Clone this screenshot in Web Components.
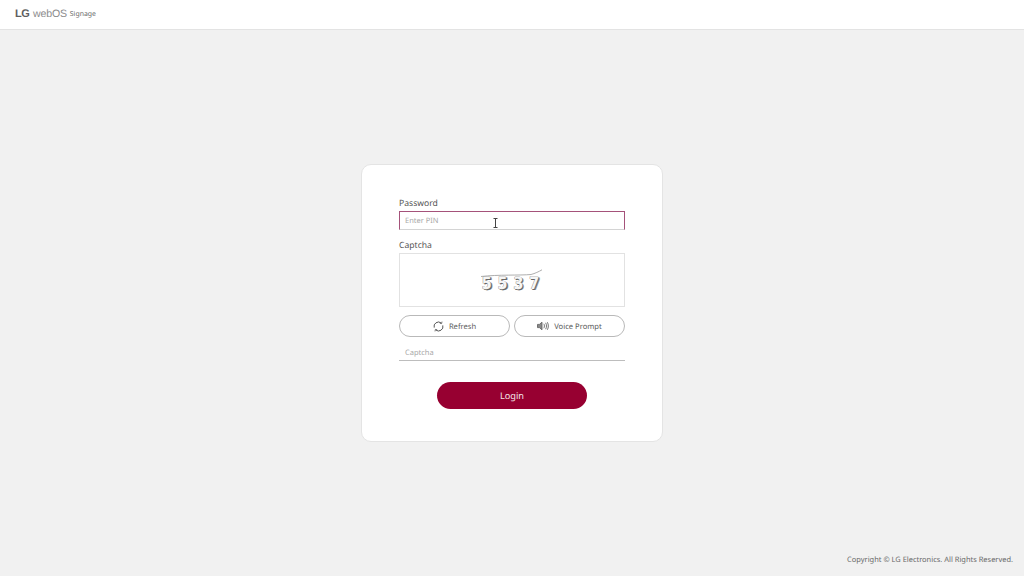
<!DOCTYPE html>
<html lang="en">
<head>
<meta charset="utf-8">
<title>LG webOS Signage</title>
<style>
  html, body { margin: 0; height: 100%; }
  body { font-family: "Noto Sans", sans-serif; background: #f1f1f1; text-rendering: geometricPrecision; }
</style>
</head>
<body>
<signage-page>
  <signage-header slot="header"></signage-header>
  <login-card>
    <form-label>Password</form-label>
    <pin-input placeholder="Enter PIN"></pin-input>
    <form-label class="second">Captcha</form-label>
    <captcha-box></captcha-box>
    <captcha-actions></captcha-actions>
    <captcha-input placeholder="Captcha"></captcha-input>
    <login-button>Login</login-button>
  </login-card>
  <signage-footer slot="footer">Copyright © LG Electronics. All Rights Reserved.</signage-footer>
</signage-page>

<script>
class SignagePage extends HTMLElement {
  constructor() {
    super();
    this.attachShadow({ mode: 'open' });
    this.shadowRoot.innerHTML = `
      <style>
        :host { display: grid; grid-template-rows: 30px 1fr 32px; height: 576px; }
        main { display: flex; justify-content: center; padding-top: 134px; }
      </style>
      <slot name="header"></slot>
      <main><slot></slot></main>
      <slot name="footer"></slot>
    `;
  }
}

class SignageHeader extends HTMLElement {
  constructor() {
    super();
    this.attachShadow({ mode: 'open' });
    this.shadowRoot.innerHTML = `
      <style>
        :host {
          display: flex; align-items: center; box-sizing: border-box; height: 30px;
          padding: 0 0 2px 15px; background: #fff; border-bottom: 1px solid #e3e3e3;
          color: #6a6a6a; white-space: nowrap;
        }
        .lg { font: bold 11px "Liberation Sans", sans-serif; letter-spacing: -0.4px; margin-right: 3.6px; color: #5f5f5f; }
        .web { font: 10.6px "Liberation Sans", sans-serif; letter-spacing: -0.2px; margin-right: 3px; color: #8c8c8c; }
        .sig { font: 6.9px "Noto Sans", sans-serif; position: relative; top: 1px; }
      </style>
      <span class="lg">LG</span><span class="web">webOS</span><span class="sig">Signage</span>
    `;
  }
}

class LoginCard extends HTMLElement {
  constructor() {
    super();
    this.attachShadow({ mode: 'open' });
    this.shadowRoot.innerHTML = `
      <style>
        :host {
          display: flex; flex-direction: column; box-sizing: border-box;
          width: 302px; height: 278px; padding: 30px 37px 0;
          background: #fff; border: 1px solid #e4e4e4; border-radius: 10px;
        }
      </style>
      <slot></slot>
    `;
  }
}

class FormLabel extends HTMLElement {
  constructor() {
    super();
    this.attachShadow({ mode: 'open' });
    this.shadowRoot.innerHTML = `
      <style>
        :host { display: block; height: 16px; font-size: 8.6px; line-height: 17px; color: #555; }
        :host(.second) { height: 15px; margin-top: 7px; }
      </style>
      <slot></slot>
    `;
  }
}

class PinInput extends HTMLElement {
  constructor() {
    super();
    this.attachShadow({ mode: 'open' });
    this.shadowRoot.innerHTML = `
      <style>
        :host {
          display: block; position: relative; box-sizing: border-box; height: 19px;
          border: 1px solid #a5527a; border-bottom: 1px solid #d4d4d4;
          font-size: 7.5px; line-height: 18px; color: #a8a8a8; padding-left: 5px;
        }
        svg { position: absolute; left: 93px; top: 6px; }
      </style>
      <span>${this.getAttribute('placeholder')}</span>
      <svg width="5" height="10" viewBox="0 0 5 10" fill="none" stroke="#444" stroke-width="1">
        <path d="M0.5 .5h4M2.5 .5v9M0.5 9.5h4"/>
      </svg>
    `;
  }
}

class CaptchaBox extends HTMLElement {
  constructor() {
    super();
    this.attachShadow({ mode: 'open' });
    this.shadowRoot.innerHTML = `
      <style>
        :host {
          display: flex; align-items: center; justify-content: center; position: relative;
          box-sizing: border-box; height: 54px; margin-top: 1px; border: 1px solid #e2e2e2;
        }
        .digits {
          font: bold 17px "DejaVu Sans", sans-serif; letter-spacing: 7px; color: #f6f6f6;
          text-shadow: 1px 1px 0 #666, 2px 1px 0 #999, -.5px 0 0 #999, 0 -.5px 0 #888;
          transform: scaleX(.84); padding: 8px 0 0 3px;
        }
        svg { position: absolute; left: 80px; top: 14px; }
      </style>
      <span class="digits">5537</span>
      <svg width="64" height="10" viewBox="0 0 64 10" fill="none" stroke="#999" stroke-width=".8">
        <path d="M1 8.5C18 6.5 40 7.5 51 6.5 55 5.5 59 3.5 62 1.8"/>
      </svg>
    `;
  }
}

class CaptchaActions extends HTMLElement {
  constructor() {
    super();
    this.attachShadow({ mode: 'open' });
    this.shadowRoot.innerHTML = `
      <style>
        :host { display: grid; grid-template-columns: 1fr 1fr; gap: 4px; margin-top: 8px; }
      </style>
      <pill-button>
        <svg slot="icon" width="11" height="11" viewBox="0 0 11 11" fill="none" stroke="#555" stroke-width="1">
          <path d="M1.2 6.6A4.4 4.4 0 0 1 8.2 2"/><path d="M9.8 4.4A4.4 4.4 0 0 1 2.8 9"/>
          <path d="M9 .6 8.6 2.6 6.8 2.2" stroke-width=".8"/><path d="M2 10.4 2.4 8.4 4.2 8.8" stroke-width=".8"/>
        </svg>
        Refresh
      </pill-button>
      <pill-button>
        <svg slot="icon" width="12" height="10" viewBox="0 0 12 10" fill="none" stroke="#666" stroke-width=".9">
          <path d="M.5 3.4H2.4L5 1.2V8.8L2.4 6.6H.5Z" fill="#888"/>
          <path d="M6.8 2.8C7.6 4 7.6 6 6.8 7.2"/><path d="M8.6 1.8C9.8 3.6 9.8 6.4 8.6 8.2"/>
          <path d="M10.3 1.2C11.7 3.4 11.7 6.6 10.3 8.8"/>
        </svg>
        Voice Prompt
      </pill-button>
    `;
  }
}

class PillButton extends HTMLElement {
  constructor() {
    super();
    this.attachShadow({ mode: 'open' });
    this.shadowRoot.innerHTML = `
      <style>
        :host {
          display: flex; align-items: center; justify-content: center; gap: 5px;
          box-sizing: border-box; height: 22px; border: 1px solid #b9b9b9; border-radius: 11px;
          background: #fff; font-size: 7.6px; color: #5a5a5a;
        }
        ::slotted(svg) { display: block; }
        span { position: relative; top: 1px; }
      </style>
      <slot name="icon"></slot><span><slot></slot></span>
    `;
  }
}

class CaptchaInput extends HTMLElement {
  constructor() {
    super();
    this.attachShadow({ mode: 'open' });
    this.shadowRoot.innerHTML = `
      <style>
        :host {
          display: block; box-sizing: border-box; height: 19px; margin-top: 5px; padding-left: 6px;
          border-bottom: 1px solid #bdbdbd; font-size: 7.5px; line-height: 22px; color: #a8a8a8;
        }
      </style>
      <span>${this.getAttribute('placeholder')}</span>
    `;
  }
}

class LoginButton extends HTMLElement {
  constructor() {
    super();
    this.attachShadow({ mode: 'open' });
    this.shadowRoot.innerHTML = `
      <style>
        :host {
          display: flex; align-items: center; justify-content: center; align-self: center;
          width: 150px; height: 27px; margin-top: 21px; border-radius: 14px;
          background: #970031; color: #f3e3e8; font-size: 9.2px;
        }
      </style>
      <slot></slot>
    `;
  }
}

class SignageFooter extends HTMLElement {
  constructor() {
    super();
    this.attachShadow({ mode: 'open' });
    this.shadowRoot.innerHTML = `
      <style>
        :host {
          display: flex; justify-content: flex-end; padding: 10px 11px 0 0;
          font-size: 7.46px; line-height: 12px; color: #6a6a6a;
        }
      </style>
      <slot></slot>
    `;
  }
}

customElements.define('signage-page', SignagePage);
customElements.define('signage-header', SignageHeader);
customElements.define('login-card', LoginCard);
customElements.define('form-label', FormLabel);
customElements.define('pin-input', PinInput);
customElements.define('captcha-box', CaptchaBox);
customElements.define('captcha-actions', CaptchaActions);
customElements.define('pill-button', PillButton);
customElements.define('captcha-input', CaptchaInput);
customElements.define('login-button', LoginButton);
customElements.define('signage-footer', SignageFooter);
</script>
</body>
</html>
